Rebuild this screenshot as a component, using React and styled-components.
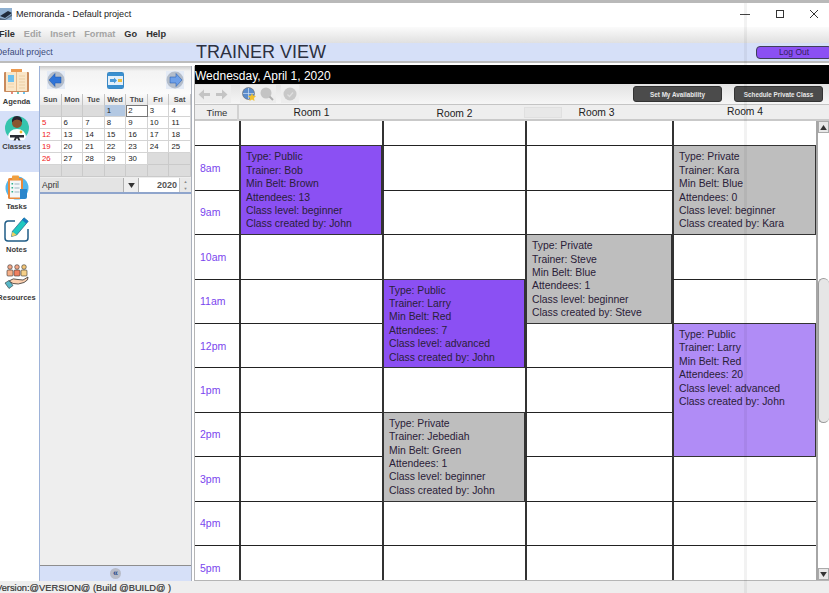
import styled, { createGlobalStyle } from 'styled-components'

const GlobalStyle = createGlobalStyle`
  html, body {
    margin: 0;
    padding: 0;
    background: #fff;
    font-family: "Liberation Sans", Arial, sans-serif;
  }
`

const weeks = [
  [null, null, null, 1, 2, 3, 4],
  [5, 6, 7, 8, 9, 10, 11],
  [12, 13, 14, 15, 16, 17, 18],
  [19, 20, 21, 22, 23, 24, 25],
  [26, 27, 28, 29, 30, null, null],
  [null, null, null, null, null, null, null],
]
const dayNames = ['Sun', 'Mon', 'Tue', 'Wed', 'Thu', 'Fri', 'Sat']
const hours = ['', '8am', '9am', '10am', '11am', '12pm', '1pm', '2pm', '3pm', '4pm', '5pm']
const rooms = [
  { name: 'Room 1', offset: 0, nudge: 1 },
  { name: 'Room 2', offset: 1, nudge: 1 },
  { name: 'Room 3', offset: 0, nudge: -2, ghost: true },
  { name: 'Room 4', offset: -1, nudge: 1 },
]

const classes = [
  { room: 1, row: 2, span: 2, kind: 'public', lines: ['Type: Public', 'Trainer: Bob', 'Min Belt: Brown', 'Attendees: 13', 'Class level: beginner', 'Class created by: John'] },
  { room: 4, row: 2, span: 2, kind: 'private', lines: ['Type: Private', 'Trainer: Kara', 'Min Belt: Blue', 'Attendees: 0', 'Class level: beginner', 'Class created by: Kara'] },
  { room: 3, row: 4, span: 2, kind: 'private', lines: ['Type: Private', 'Trainer: Steve', 'Min Belt: Blue', 'Attendees: 1', 'Class level: beginner', 'Class created by: Steve'] },
  { room: 2, row: 5, span: 2, kind: 'public', lines: ['Type: Public', 'Trainer: Larry', 'Min Belt: Red', 'Attendees: 7', 'Class level: advanced', 'Class created by: John'] },
  { room: 4, row: 6, span: 3, kind: 'open', lines: ['Type: Public', 'Trainer: Larry', 'Min Belt: Red', 'Attendees: 20', 'Class level: advanced', 'Class created by: John'] },
  { room: 2, row: 8, span: 2, kind: 'private', lines: ['Type: Private', 'Trainer: Jebediah', 'Min Belt: Green', 'Attendees: 1', 'Class level: beginner', 'Class created by: John'] },
]

const classColors = { public: '#8b50f3', private: '#bebebe', open: '#b08cf6' }

const Window = styled.div`
  position: relative;
  width: 829px;
  height: 593px;
  overflow: hidden;
  display: flex;
  flex-direction: column;
  background: #fff;
`

const Seam = styled.div`
  position: absolute;
  top: 3px;
  bottom: 0;
  left: 744px;
  width: 3px;
  background: rgba(0, 0, 0, 0.05);
  pointer-events: none;
  z-index: 5;
`

const TitleBar = styled.div`
  height: 21px;
  flex: none;
  border-top: 3px solid #b9b9b9;
  display: flex;
  align-items: center;
  color: #222;
  font-size: 9.1px;
  padding-bottom: 3px;
  background: #fff;
`

const TitleText = styled.span`
  margin-left: 4px;
  flex: 1;
`

const WindowButton = styled.div`
  width: 34px;
  height: 16px;
  flex: none;
  display: flex;
  align-items: center;
  justify-content: center;
  margin-right: ${(p) => p.$gap || 0}px;
`

const MenuBar = styled.div`
  height: 13px;
  flex: none;
  display: flex;
  align-items: center;
  gap: 9px;
  padding-bottom: 3px;
  font-size: 9.2px;
  font-weight: 700;
  background: linear-gradient(#fbfbfb, #e0e0e0);
`

const MenuItem = styled.span`
  color: ${(p) => (p.$off ? '#a4a4a4' : '#303030')};
  margin-left: ${(p) => p.$shift || 0}px;
`

const ProjectBar = styled.div`
  height: 18px;
  flex: none;
  display: flex;
  align-items: center;
  background: #d6e0f8;
  border-bottom: 2px solid #bcbcbc;
`

const ProjectName = styled.span`
  width: 200px;
  margin-left: -4px;
  flex: none;
  font-size: 8.8px;
  color: #3b4a78;
`

const Heading = styled.h1`
  margin: 0;
  flex: 1;
  font-size: 18px;
  font-weight: 400;
  color: #2c3040;
`

const LogOut = styled.button`
  width: 76px;
  height: 13px;
  margin-right: -3px;
  padding: 0;
  background: #8b50f3;
  border: 1px solid #3f3f5a;
  border-radius: 4px;
  font: 8.5px "Liberation Sans", Arial, sans-serif;
  color: #33205a;
`

const Body = styled.div`
  flex: 1;
  min-height: 0;
  display: flex;
  padding-top: 3px;
  background: #fff;
`

const Sidebar = styled.nav`
  width: 40px;
  flex: none;
  display: flex;
  flex-direction: column;
`

const SideItem = styled.div`
  height: ${(p) => p.$h}px;
  flex: none;
  display: flex;
  flex-direction: column;
  align-items: center;
  justify-content: flex-end;
  gap: ${(p) => p.$gap}px;
  padding: 0 7px ${(p) => p.$pad}px 0;
  box-sizing: border-box;
  background: ${(p) => (p.$active ? '#d6e0f8' : '#fff')};
`

const SideLabel = styled.span`
  font-size: 7.5px;
  line-height: 9px;
  font-weight: 700;
  color: #3a3a3a;
  white-space: nowrap;
`

const CalendarPanel = styled.aside`
  width: 153px;
  flex: none;
  margin-left: -1px;
  display: flex;
  flex-direction: column;
  box-sizing: border-box;
  border-left: 1px solid #9db2d8;
  border-right: 1px solid #aab0bc;
  background: #eeeeee;
`

const CalendarNav = styled.div`
  height: 28px;
  flex: none;
  display: flex;
  align-items: center;
  justify-content: space-between;
  padding: 0 7px;
  background: linear-gradient(#c9c9c9, #f3f3f3 18%, #fbfbfb);
`

const DayHeader = styled.div`
  display: grid;
  grid-template-columns: repeat(7, 1fr);
  height: 11px;
  flex: none;
`

const DayName = styled.div`
  font-size: 7.5px;
  font-weight: 700;
  color: #4a4a4a;
  text-align: center;
  line-height: 11px;
  background: linear-gradient(#fafafa, #e9e9e9);
  border-right: 1px solid #c4c4c4;
`

const Month = styled.div`
  display: grid;
  grid-template-columns: repeat(7, 1fr);
  grid-auto-rows: 12px;
  flex: none;
`

const DayCell = styled.div`
  box-sizing: border-box;
  font-size: 7.8px;
  line-height: 11px;
  padding-left: 2px;
  color: ${(p) => (p.$sunday ? '#f01818' : '#222')};
  background: ${(p) => (p.$empty ? '#dcdcdc' : p.$selected ? '#b3c8e2' : '#fff')};
  border-right: 1px solid ${(p) => (p.$empty ? '#cacaca' : '#d4d4d4')};
  border-bottom: 1px solid ${(p) => (p.$empty ? '#cacaca' : '#d4d4d4')};
  outline: ${(p) => (p.$today ? '1px solid #777' : 'none')};
  outline-offset: -1px;
`

const MonthPicker = styled.div`
  height: 14px;
  flex: none;
  margin-top: 1px;
  display: flex;
  align-items: center;
  border-bottom: 2px solid #8fa5cc;
  background: #fff;
  font-size: 8.5px;
  color: #333;
`

const MonthName = styled.div`
  width: 84px;
  height: 100%;
  line-height: 14px;
  padding-left: 2px;
  box-sizing: border-box;
  background: #e4e4e4;
  border-right: 1px solid #b0b0b0;
`

const MonthArrow = styled.div`
  width: 14px;
  height: 100%;
  display: flex;
  align-items: center;
  justify-content: center;
  background: #eeeeee;
  border-right: 1px solid #b0b0b0;
`

const YearValue = styled.div`
  flex: 1;
  text-align: right;
  font-weight: 700;
  font-size: 9px;
  padding-right: 2px;
  color: #555;
`

const YearSpin = styled.div`
  width: 11px;
  height: 100%;
  display: flex;
  flex-direction: column;
  background: #e8e8e8;
  border-left: 1px solid #c8c8c8;
`

const SpinPart = styled.div`
  flex: 1;
  font-size: 4px;
  line-height: 7px;
  text-align: center;
  color: #888;
`

const PanelFill = styled.div`
  flex: 1;
`

const CollapseBar = styled.div`
  height: 15px;
  flex: none;
  display: flex;
  align-items: center;
  justify-content: center;
  background: #d6e0f8;
  border-top: 1px solid #8e8e8e;
`

const CollapseKnob = styled.span`
  width: 11px;
  height: 11px;
  border-radius: 50%;
  background: #b8bcc8;
  color: #27488a;
  font-size: 9px;
  font-weight: 700;
  line-height: 10px;
  text-align: center;
`

const Main = styled.main`
  flex: 1;
  min-width: 0;
  margin-left: 2px;
  display: flex;
  flex-direction: column;
  border-left: 1px solid #b5b5b5;
`

const DateBar = styled.div`
  height: 19px;
  flex: none;
  margin-top: -1px;
  background: #000;
  color: #fff;
  font-size: 12px;
  line-height: 22px;
`

const Toolbar = styled.div`
  height: 20px;
  flex: none;
  display: flex;
  align-items: center;
  background: linear-gradient(#e2e2e2, #f6f6f6);
  border-bottom: 1px solid #c4c4c4;
`

const ToolGroup = styled.div`
  height: 18px;
  display: flex;
  align-items: center;
  padding: 0 ${(p) => p.$pad}px;
  gap: ${(p) => p.$gap}px;
  margin-left: ${(p) => p.$left}px;
  background: #ededed;
`

const ToolSpacer = styled.div`
  flex: 1;
`

const ScheduleButton = styled.button`
  width: ${(p) => p.$w}px;
  height: 16px;
  margin-right: ${(p) => p.$right}px;
  padding: 0;
  background: #4b4b4b;
  border: 1px solid #333;
  border-radius: 3px;
  color: #e8e8e8;
  font: 700 6.3px "Liberation Sans", Arial, sans-serif;
`

const ColumnHeader = styled.div`
  height: 14px;
  flex: none;
  display: grid;
  grid-template-columns: 44px 143px 143px 147px 144px 1fr;
  background: #eeeeee;
  border-bottom: 2px solid #c9c9c9;
`

const TimeHeader = styled.div`
  font-size: 9.5px;
  line-height: 16px;
  text-align: center;
  color: #333;
  box-shadow: inset -2px 0 0 #d2d2d2;
`

const RoomHeader = styled.div`
  position: relative;
  font-size: 10.3px;
  line-height: 15px;
  text-align: center;
  top: ${(p) => p.$offset}px;
  left: ${(p) => p.$nudge}px;
  color: #222;
`

const GhostBox = styled.span`
  position: absolute;
  left: 1px;
  top: 2px;
  width: 36px;
  height: 9px;
  background: #e8e8e8;
  border: 1px solid #e0e0e0;
`

const Schedule = styled.div`
  flex: 1;
  min-height: 0;
  display: flex;
  overflow: hidden;
  background: #fff;
  border-bottom: 1px solid #b5b5b5;
`

const ScheduleGrid = styled.div`
  width: 621px;
  flex: none;
  display: grid;
  grid-template-columns: 44px 143px 143px 147px 144px;
  grid-template-rows: 25.4px repeat(10, 44.4px);
`

const TimeCell = styled.div`
  grid-column: 1;
  grid-row: ${(p) => p.$row};
  box-sizing: border-box;
  display: flex;
  align-items: center;
  padding-left: 5px;
  font-size: 10.5px;
  color: #7a46ee;
  border-bottom: 1px solid #222;
`

const SlotCell = styled.div`
  grid-column: ${(p) => p.$col};
  grid-row: ${(p) => p.$row};
  box-sizing: border-box;
  border-left: 2px solid #333;
  border-bottom: 1px solid #222;
`

const ClassCard = styled.div`
  grid-column: ${(p) => p.$col};
  grid-row: ${(p) => p.$row} / span ${(p) => p.$span};
  z-index: 1;
  box-sizing: border-box;
  margin-top: -1px;
  padding: 4px 0 0 5px;
  background: ${(p) => classColors[p.$kind]};
  border: 1px solid #333;
  border-left-width: 2px;
  font-size: 10.4px;
  line-height: 13.4px;
  color: #2a2038;
`

const Scrollbar = styled.div`
  flex: 1;
  display: flex;
  flex-direction: column;
  border-left: 2px solid #a6a6a6;
  background: #fff;
`

const ScrollArrow = styled.div`
  height: 12px;
  flex: none;
  margin-top: ${(p) => p.$top || 0}px;
  display: flex;
  align-items: center;
  justify-content: center;
  background: #e8e8e8;
  border: 1px solid #aaa;
  box-sizing: border-box;
`

const ScrollThumb = styled.div`
  height: 145px;
  box-sizing: border-box;
  flex: none;
  margin-top: 145px;
  background: #e6e6e6;
  border: 1px solid #9a9a9a;
  border-right: none;
  border-radius: 7px;
`

const StatusBar = styled.footer`
  height: 12px;
  flex: none;
  font-size: 9.3px;
  line-height: 14px;
  color: #333;
  background: #eeeeee;
  text-indent: -4px;
  white-space: nowrap;
  -webkit-text-stroke: 0.2px #333;
`

const AppIcon = () => (
  <svg width="12" height="12" viewBox="0 0 12 12">
    <rect width="12" height="12" fill="#8fb0d0" />
    <path d="M0 8 L8 3 L12 5 L5 10 Z" fill="#1f2b3a" />
    <path d="M0 10 L5 11 L12 6 V8 L5 12 H0 Z" fill="#55697e" />
  </svg>
)

const AgendaIcon = () => (
  <svg width="25" height="26" viewBox="0 0 25 26">
    <rect x="0" y="4" width="25" height="20" rx="1" fill="#c98a5c" />
    <rect x="2" y="4" width="21" height="19" fill="#fae6c8" />
    <rect x="12" y="4" width="1" height="19" fill="#e6b98c" />
    <rect x="7" y="1" width="11" height="3" fill="#ed9a50" />
    <rect x="4" y="7" width="6" height="7" fill="#6cc0ee" />
    <path d="M15 8h6M15 11h6M15 14h6M15 17h6M15 20h6" stroke="#eccfa4" strokeWidth="1" />
    <path d="M4 16h6M4 19h6" stroke="#efd3ac" strokeWidth="1" />
    <rect x="7" y="24" width="2" height="2" fill="#e88a7c" />
    <rect x="13" y="24" width="2" height="2" fill="#6cc8c0" />
    <rect x="19" y="24" width="2" height="2" fill="#6cc0ee" />
  </svg>
)

const ClassesIcon = () => (
  <svg width="24" height="26" viewBox="0 0 24 26">
    <circle cx="12" cy="13" r="12" fill="#35c4ae" />
    <path d="M3 22 Q4 14 12 14 Q20 14 21 22 L19 25 H5 Z" fill="#fff" />
    <path d="M5 20h14v2.500H14l1.500 3h-2L12 23l-1.500 2.500h-2l1.500-3H5z" fill="#2c2c34" />
    <circle cx="12" cy="8" r="5" fill="#8a5530" />
    <path d="M7 7.500 Q6.500 1 12 1 Q17.500 1 17 7.500 Q15 4.500 12 4.500 Q9 4.500 7 7.500 Z" fill="#2a2230" />
    <circle cx="16" cy="17" r="1.400" fill="#f0b830" />
  </svg>
)

const TasksIcon = () => (
  <svg width="24" height="26" viewBox="0 0 24 26">
    <circle cx="12" cy="14" r="11.500" fill="#52b6ec" />
    <rect x="3" y="4" width="15" height="21" rx="1.500" fill="#e98a3c" />
    <rect x="5" y="6.500" width="11" height="17" fill="#f4f7f8" />
    <rect x="7" y="1.500" width="7" height="4.500" rx="1" fill="#f0a040" />
    <path d="M9.500 10h5M9.500 14h5M9.500 18h5" stroke="#9bb8c4" strokeWidth="1.200" />
    <path d="M6.500 9h1.600v1.600H6.500zM6.500 13h1.600v1.600H6.500zM6.500 17h1.600v1.600H6.500z" fill="#2fb08a" />
    <path d="M15 15h7v8a2 2 0 0 1-2 2h-5z" fill="#2a86cc" />
  </svg>
)

const NotesIcon = () => (
  <svg width="25" height="25" viewBox="0 0 25 25">
    <path d="M11 4H4a3 3 0 0 0-3 3v14a3 3 0 0 0 3 3h17a3 3 0 0 0 3-3V12" fill="none" stroke="#1f5c86" strokeWidth="1.500" />
    <path d="M20 0.800l4.200 3.500-11.500 13.700-5.200 1.500 1-5.300z" fill="#1fc8c0" stroke="#1f5c86" strokeWidth="0.700" />
    <path d="M20 0.800l4.200 3.500-2 2.300-4.200-3.500z" fill="#1a7cc0" />
    <path d="M8.500 14.700l4.200 3.300-5.200 1.500z" fill="#f0d060" />
  </svg>
)

const ResourcesIcon = () => (
  <svg width="25" height="25" viewBox="0 0 25 25">
    <circle cx="6" cy="3" r="2.300" fill="#f4a888" stroke="#333" strokeWidth="0.600" />
    <circle cx="13" cy="3" r="2.300" fill="#f4a888" stroke="#333" strokeWidth="0.600" />
    <circle cx="20" cy="3" r="2.300" fill="#f6c878" stroke="#333" strokeWidth="0.600" />
    <rect x="3" y="6" width="6" height="6" rx="1" fill="#f6b088" stroke="#333" strokeWidth="0.600" />
    <rect x="10" y="6" width="6" height="6" rx="1" fill="#f08060" stroke="#333" strokeWidth="0.600" />
    <rect x="17" y="6" width="6" height="6" rx="1" fill="#f6d088" stroke="#333" strokeWidth="0.600" />
    <path d="M5 17 Q9 13.500 14 15.500 L19 16 L24 13 Q25 16 20 18.500 Q14 21 9 19.500 Z" fill="#fbd0b0" stroke="#333" strokeWidth="0.800" />
    <path d="M1 19l4-2.500 4 5-4 3z" fill="#58b8c8" stroke="#333" strokeWidth="0.600" />
  </svg>
)

const RoundArrow = ({ flip, dim }) => (
  <svg width="18" height="18" viewBox="0 0 18 18">
    <rect width="18" height="18" fill="#e4ebf6" />
    <circle cx="9" cy="9" r="8.500" fill="#b4bdca" />
    <path
      d={flip ? 'M4 6h6V2.500L16 9l-6 6.500V12H4z' : 'M14 6H8V2.500L2 9l6 6.500V12h6z'}
      fill={dim ? '#6d9fe8' : '#2f74d8'}
      stroke="#1f57a8"
      strokeWidth="0.500"
    />
  </svg>
)

const TodayIcon = () => (
  <svg width="17" height="17" viewBox="0 0 17 17">
    <rect x="0.500" y="0.500" width="16" height="16" rx="1" fill="#e4f0fa" stroke="#3a88c4" />
    <rect x="1" y="1" width="15" height="3" fill="#3a90d0" />
    <rect x="1" y="13" width="15" height="3" fill="#3a90d0" />
    <path d="M3 7h4V5.500l3 3-3 3V10H3z" fill="#4a9ad8" />
    <rect x="11" y="7" width="4" height="3" fill="#f0c040" />
  </svg>
)

const ToolArrow = ({ flip }) => (
  <svg width="13" height="11" viewBox="0 0 13 11">
    <path d={flip ? 'M1 4h6V0.500L12.500 5.500 7 10.500V7H1z' : 'M12 4H6V0.500L0.500 5.500 6 10.500V7h6z'} fill="#c4c4c4" />
  </svg>
)

const GlobeTool = () => (
  <svg width="14" height="14" viewBox="0 0 14 14">
    <circle cx="6.500" cy="6.500" r="6" fill="#5a8ccc" stroke="#666" strokeWidth="0.600" />
    <path d="M1 6.500h11M6.500 1v11" stroke="#cfe0f4" strokeWidth="0.700" />
    <path d="M10 6l1 2.500 3 .5-2 2 .5 3-2.500-1.500L7.500 14l.5-3-2-2 3-.5z" fill="#f2c230" />
  </svg>
)

const SearchTool = () => (
  <svg width="14" height="14" viewBox="0 0 14 14">
    <circle cx="6" cy="6" r="5.500" fill="#c4c4c4" />
    <path d="M9.500 9.500L13 13" stroke="#b0b0b0" strokeWidth="2" />
  </svg>
)

const CheckTool = () => (
  <svg width="14" height="14" viewBox="0 0 14 14">
    <circle cx="7" cy="7" r="6.500" fill="#c8c8c8" />
    <path d="M4.500 7.500l2 2 3.500-4" stroke="#dedede" fill="none" strokeWidth="1.200" />
  </svg>
)

const Triangle = ({ down, size = 7 }) => (
  <svg width={size} height={size - 2} viewBox="0 0 8 6">
    <path d={down ? 'M0 0h8L4 6z' : 'M4 0l4 6H0z'} fill="#333" />
  </svg>
)

const sideItems = [
  { label: 'Agenda', Icon: AgendaIcon, h: 45, gap: 3, pad: 5 },
  { label: 'Classes', Icon: ClassesIcon, h: 61, gap: 1, pad: 21 },
  { label: 'Tasks', Icon: TasksIcon, h: 42, gap: 2, pad: 3 },
  { label: 'Notes', Icon: NotesIcon, h: 43, gap: 3, pad: 3 },
  { label: 'Resources', Icon: ResourcesIcon, h: 47, gap: 4, pad: 2 },
]

export default function App() {
  return (
    <>
      <GlobalStyle />
      <Window>
        <Seam />
        <TitleBar>
          <AppIcon />
          <TitleText>Memoranda - Default project</TitleText>
          <WindowButton $gap={1}>
            <svg width="10" height="10"><path d="M0 5.500h10" stroke="#444" /></svg>
          </WindowButton>
          <WindowButton>
            <svg width="10" height="10"><rect x="1.500" y="1.500" width="7" height="7" fill="none" stroke="#333" /></svg>
          </WindowButton>
          <WindowButton $gap={-2}>
            <svg width="10" height="10"><path d="M1 1l8 8M9 1l-8 8" stroke="#333" /></svg>
          </WindowButton>
        </TitleBar>

        <MenuBar>
          <MenuItem $shift={-1}>File</MenuItem>
          <MenuItem $off>Edit</MenuItem>
          <MenuItem $off>Insert</MenuItem>
          <MenuItem $off>Format</MenuItem>
          <MenuItem>Go</MenuItem>
          <MenuItem>Help</MenuItem>
        </MenuBar>

        <ProjectBar>
          <ProjectName>Default project</ProjectName>
          <Heading>TRAINER VIEW</Heading>
          <LogOut>Log Out</LogOut>
        </ProjectBar>

        <Body>
          <Sidebar>
            {sideItems.map(({ label, Icon, h, gap, pad }) => (
              <SideItem key={label} $h={h} $gap={gap} $pad={pad} $active={label === 'Classes'}>
                <Icon />
                <SideLabel>{label}</SideLabel>
              </SideItem>
            ))}
          </Sidebar>

          <CalendarPanel>
            <CalendarNav>
              <RoundArrow />
              <TodayIcon />
              <RoundArrow flip dim />
            </CalendarNav>
            <DayHeader>
              {dayNames.map((d) => (
                <DayName key={d}>{d}</DayName>
              ))}
            </DayHeader>
            <Month>
              {weeks.flat().map((day, i) => (
                <DayCell
                  key={i}
                  $empty={day === null}
                  $sunday={i % 7 === 0}
                  $selected={day === 1}
                  $today={day === 2}
                >
                  {day}
                </DayCell>
              ))}
            </Month>
            <MonthPicker>
              <MonthName>April</MonthName>
              <MonthArrow>
                <Triangle down />
              </MonthArrow>
              <YearValue>2020</YearValue>
              <YearSpin>
                <SpinPart>▲</SpinPart>
                <SpinPart>▼</SpinPart>
              </YearSpin>
            </MonthPicker>
            <PanelFill />
            <CollapseBar>
              <CollapseKnob>«</CollapseKnob>
            </CollapseBar>
          </CalendarPanel>

          <Main>
            <DateBar>Wednesday, April 1, 2020</DateBar>
            <Toolbar>
              <ToolGroup $left={0} $gap={4} $pad={3}>
                <ToolArrow />
                <ToolArrow flip />
              </ToolGroup>
              <ToolGroup $left={9} $gap={4} $pad={2}>
                <GlobeTool />
                <SearchTool />
              </ToolGroup>
              <ToolGroup $left={5} $gap={0} $pad={2}>
                <CheckTool />
              </ToolGroup>
              <ToolSpacer />
              <ScheduleButton $w={89} $right={12}>Set My Availability</ScheduleButton>
              <ScheduleButton $w={89} $right={6}>Schedule Private Class</ScheduleButton>
            </Toolbar>
            <ColumnHeader>
              <TimeHeader>Time</TimeHeader>
              {rooms.map((room) => (
                <RoomHeader key={room.name} $offset={room.offset} $nudge={room.nudge}>
                  {room.ghost && <GhostBox />}
                  {room.name}
                </RoomHeader>
              ))}
            </ColumnHeader>
            <Schedule>
              <ScheduleGrid>
                {hours.map((hour, i) => (
                  <TimeCell key={i} $row={i + 1}>{hour}</TimeCell>
                ))}
                {hours.map((_, i) =>
                  rooms.map((room, r) => (
                    <SlotCell key={`${room.name}-${i}`} $col={r + 2} $row={i + 1} />
                  ))
                )}
                {classes.map((item) => (
                  <ClassCard key={`${item.room}-${item.row}`} $col={item.room + 1} $row={item.row} $span={item.span} $kind={item.kind}>
                    {item.lines.map((line) => (
                      <div key={line}>{line}</div>
                    ))}
                  </ClassCard>
                ))}
              </ScheduleGrid>
              <Scrollbar>
                <ScrollArrow><Triangle /></ScrollArrow>
                <ScrollThumb />
                <ScrollArrow $top={145}><Triangle down /></ScrollArrow>
              </Scrollbar>
            </Schedule>
          </Main>
        </Body>

        <StatusBar>Version:@VERSION@ (Build @BUILD@ )</StatusBar>
      </Window>
    </>
  )
}
